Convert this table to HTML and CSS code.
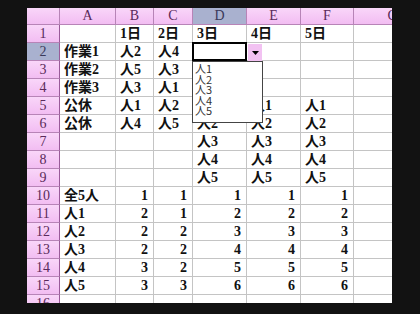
FILE: index.html
```html
<!DOCTYPE html>
<html>
<head>
<meta charset="utf-8">
<link rel="stylesheet" href="styles.css">
</head>
<body>
<div class="sheet">
  <div class="h corner"></div><div class="h">A</div><div class="h">B</div><div class="h">C</div><div class="h hs">D</div><div class="h">E</div><div class="h">F</div><div class="h">G</div>

  <div class="r">1</div><div class="c"></div><div class="c">1日</div><div class="c">2日</div><div class="c">3日</div><div class="c">4日</div><div class="c">5日</div><div class="c"></div>
  <div class="r rs">2</div><div class="c">作業1</div><div class="c">人2</div><div class="c">人4</div><div class="c active"></div><div class="c"></div><div class="c"></div><div class="c"></div>
  <div class="r">3</div><div class="c">作業2</div><div class="c">人5</div><div class="c">人3</div><div class="c"></div><div class="c"></div><div class="c"></div><div class="c"></div>
  <div class="r">4</div><div class="c">作業3</div><div class="c">人3</div><div class="c">人1</div><div class="c"></div><div class="c"></div><div class="c"></div><div class="c"></div>
  <div class="r">5</div><div class="c">公休</div><div class="c">人1</div><div class="c">人2</div><div class="c"></div><div class="c">人1</div><div class="c">人1</div><div class="c"></div>
  <div class="r">6</div><div class="c">公休</div><div class="c">人4</div><div class="c">人5</div><div class="c">人2</div><div class="c">人2</div><div class="c">人2</div><div class="c"></div>
  <div class="r">7</div><div class="c"></div><div class="c"></div><div class="c"></div><div class="c">人3</div><div class="c">人3</div><div class="c">人3</div><div class="c"></div>
  <div class="r">8</div><div class="c"></div><div class="c"></div><div class="c"></div><div class="c">人4</div><div class="c">人4</div><div class="c">人4</div><div class="c"></div>
  <div class="r">9</div><div class="c"></div><div class="c"></div><div class="c"></div><div class="c">人5</div><div class="c">人5</div><div class="c">人5</div><div class="c"></div>
  <div class="r">10</div><div class="c">全5人</div><div class="c n">1</div><div class="c n">1</div><div class="c n">1</div><div class="c n">1</div><div class="c n">1</div><div class="c"></div>
  <div class="r">11</div><div class="c">人1</div><div class="c n">2</div><div class="c n">1</div><div class="c n">2</div><div class="c n">2</div><div class="c n">2</div><div class="c"></div>
  <div class="r">12</div><div class="c">人2</div><div class="c n">2</div><div class="c n">2</div><div class="c n">3</div><div class="c n">3</div><div class="c n">3</div><div class="c"></div>
  <div class="r">13</div><div class="c">人3</div><div class="c n">2</div><div class="c n">2</div><div class="c n">4</div><div class="c n">4</div><div class="c n">4</div><div class="c"></div>
  <div class="r">14</div><div class="c">人4</div><div class="c n">3</div><div class="c n">2</div><div class="c n">5</div><div class="c n">5</div><div class="c n">5</div><div class="c"></div>
  <div class="r">15</div><div class="c">人5</div><div class="c n">3</div><div class="c n">3</div><div class="c n">6</div><div class="c n">6</div><div class="c n">6</div><div class="c"></div>
  <div class="r">16</div><div class="c"></div><div class="c"></div><div class="c"></div><div class="c"></div><div class="c"></div><div class="c"></div><div class="c"></div>

  <div class="ddbtn"><svg width="7" height="4" viewBox="0 0 7 4"><path d="M0 0H7L3.5 4Z" fill="#000"/></svg></div>
  <div class="ddlist">
    <div class="item">人1</div>
    <div class="item">人2</div>
    <div class="item">人3</div>
    <div class="item">人4</div>
    <div class="item">人5</div>
  </div>
</div>
</body>
</html>
```

FILE: styles.css
```css
html, body {
  margin: 0;
  padding: 0;
  background: #121212;
}
body {
  width: 420px;
  height: 314px;
  overflow: hidden;
}
.sheet {
  margin: 8px 0 0 27px;
  width: 365px;
  height: 295px;
  overflow: hidden;
  position: relative;
  background: #fff;
  display: grid;
  grid-template-columns: 33px 56px 38px 39px 54px 54px 53px 78px;
  grid-template-rows: 17px repeat(16, 18px);
}
.h, .r {
  box-sizing: border-box;
  background: linear-gradient(#f9d6f9, #f2bdf2);
  color: #5a2a5a;
  font-family: "Liberation Serif", serif;
  font-size: 14px;
  line-height: 16px;
  text-align: center;
  border-right: 1px solid #b784b7;
  border-bottom: 1px solid #b784b7;
}
.h.hs, .r.rs {
  background: #a9b1cf;
  color: #3a3a5a;
}
.r {
  line-height: 18px;
  border-right-color: #9a5a9a;
}
.c {
  box-sizing: border-box;
  border-right: 1px solid #c4c4c4;
  border-bottom: 1px solid #c4c4c4;
  font-family: "Liberation Serif", "Noto Sans CJK JP", serif;
  font-weight: 700;
  font-size: 14px;
  line-height: 17px;
  color: #111;
  padding-left: 4px;
  white-space: nowrap;
  overflow: hidden;
}
.c.n {
  text-align: right;
  padding-left: 0;
  padding-right: 5px;
}
.c.active {
  border: 2px solid #000;
  margin: -1px 0 0 -1px;
}
.ddbtn {
  position: absolute;
  left: 221px;
  top: 36px;
  width: 14px;
  height: 17px;
  box-sizing: border-box;
  background: #f2c2f2;
  display: flex;
  align-items: center;
  justify-content: center;
}
.ddlist {
  position: absolute;
  left: 165px;
  top: 53px;
  width: 71px;
  height: 62px;
  box-sizing: border-box;
  background: #fff;
  border: 1px solid #444;
  padding: 1px 0 0 2px;
}
.item {
  font-family: "Noto Sans CJK JP", sans-serif;
  font-size: 11px;
  line-height: 10.6px;
  color: #333;
}
```
